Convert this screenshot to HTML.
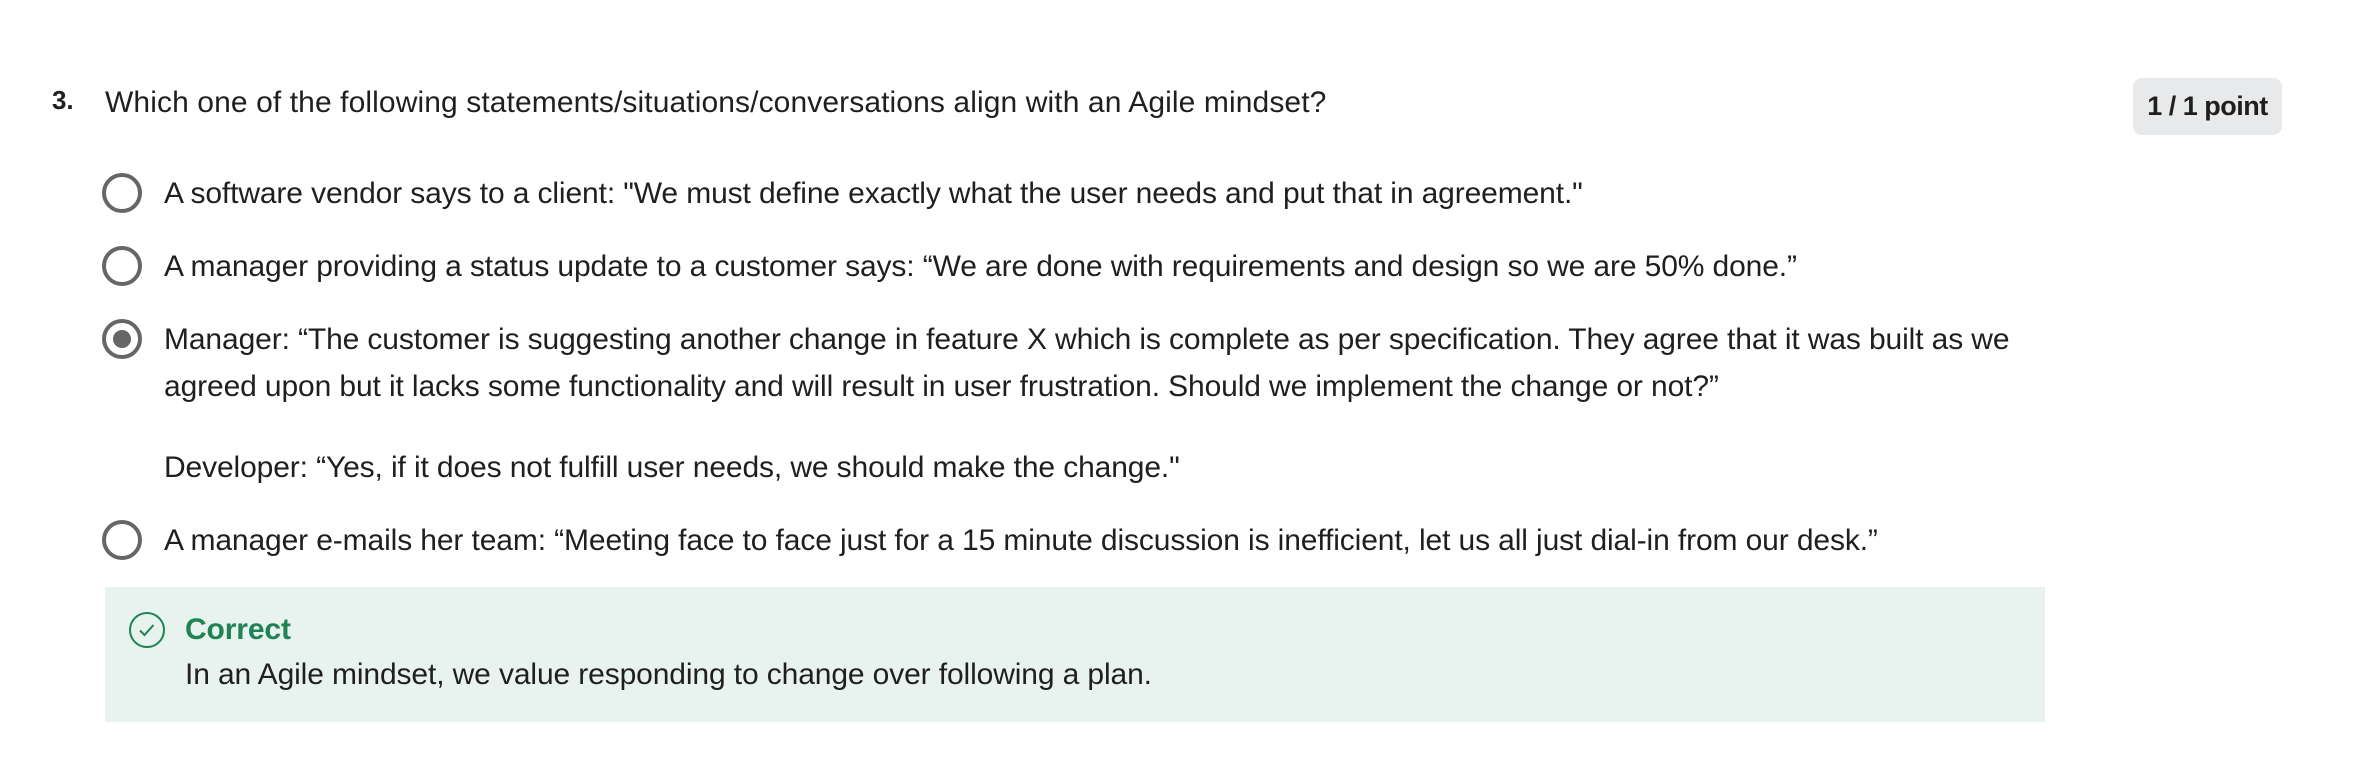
<!DOCTYPE html>
<html><head><meta charset="utf-8"><style>
html,body{margin:0;padding:0;background:#fff;}
body{width:2371px;height:782px;position:relative;overflow:hidden;font-family:"Liberation Sans",sans-serif;color:#1f1f1f;}
.t{position:absolute;white-space:nowrap;font-size:30px;letter-spacing:-0.12px;line-height:40px;}
.r{position:absolute;left:102px;width:32px;height:32px;border:4px solid #666;border-radius:50%;box-sizing:content-box;}
</style></head><body>
<div class="t" style="left:52px;top:80px;font-weight:bold;font-size:26px;">3.</div>
<div class="t" style="left:105px;top:83px;letter-spacing:0.1px;">Which one of the following statements/situations/conversations align with an Agile mindset?</div>
<div style="position:absolute;left:2133px;top:78px;width:149px;height:57px;background:#e8e9eb;border-radius:9px;font-weight:bold;font-size:27px;line-height:57px;text-align:center;letter-spacing:-0.5px;">1 / 1 point</div>

<div class="r" style="top:173px;"></div>
<div class="t" style="left:164px;top:174px;">A software vendor says to a client: "We must define exactly what the user needs and put that in agreement."</div>
<div class="r" style="top:246px;"></div>
<div class="t" style="left:164px;top:247px;">A manager providing a status update to a customer says: “We are done with requirements and design so we are 50% done.”</div>
<div class="r" style="top:319px;"><div style="position:absolute;left:7px;top:7px;width:18px;height:18px;border-radius:50%;background:#666;"></div></div>
<div class="t" style="left:164px;top:320px;">Manager: “The customer is suggesting another change in feature X which is complete as per specification. They agree that it was built as we</div>
<div class="t" style="left:164px;top:367px;">agreed upon but it lacks some functionality and will result in user frustration. Should we implement the change or not?”</div>
<div class="t" style="left:164px;top:448px;">Developer: “Yes, if it does not fulfill user needs, we should make the change."</div>
<div class="r" style="top:520px;"></div>
<div class="t" style="left:164px;top:521px;">A manager e-mails her team: “Meeting face to face just for a 15 minute discussion is inefficient, let us all just dial-in from our desk.”</div>

<div style="position:absolute;left:105px;top:587px;width:1940px;height:135px;background:#e8f2ee;"></div>
<svg style="position:absolute;left:128px;top:611px;" width="38" height="38" viewBox="0 0 38 38"><circle cx="19" cy="19" r="17" fill="none" stroke="#1f8354" stroke-width="2"/><path d="M12 19.5l4.5 4.5 9-10" fill="none" stroke="#1f8354" stroke-width="2"/></svg>
<div class="t" style="left:185px;top:610px;font-weight:bold;color:#1f8354;">Correct</div>
<div class="t" style="left:185px;top:655px;">In an Agile mindset, we value responding to change over following a plan.</div>
</body></html>
